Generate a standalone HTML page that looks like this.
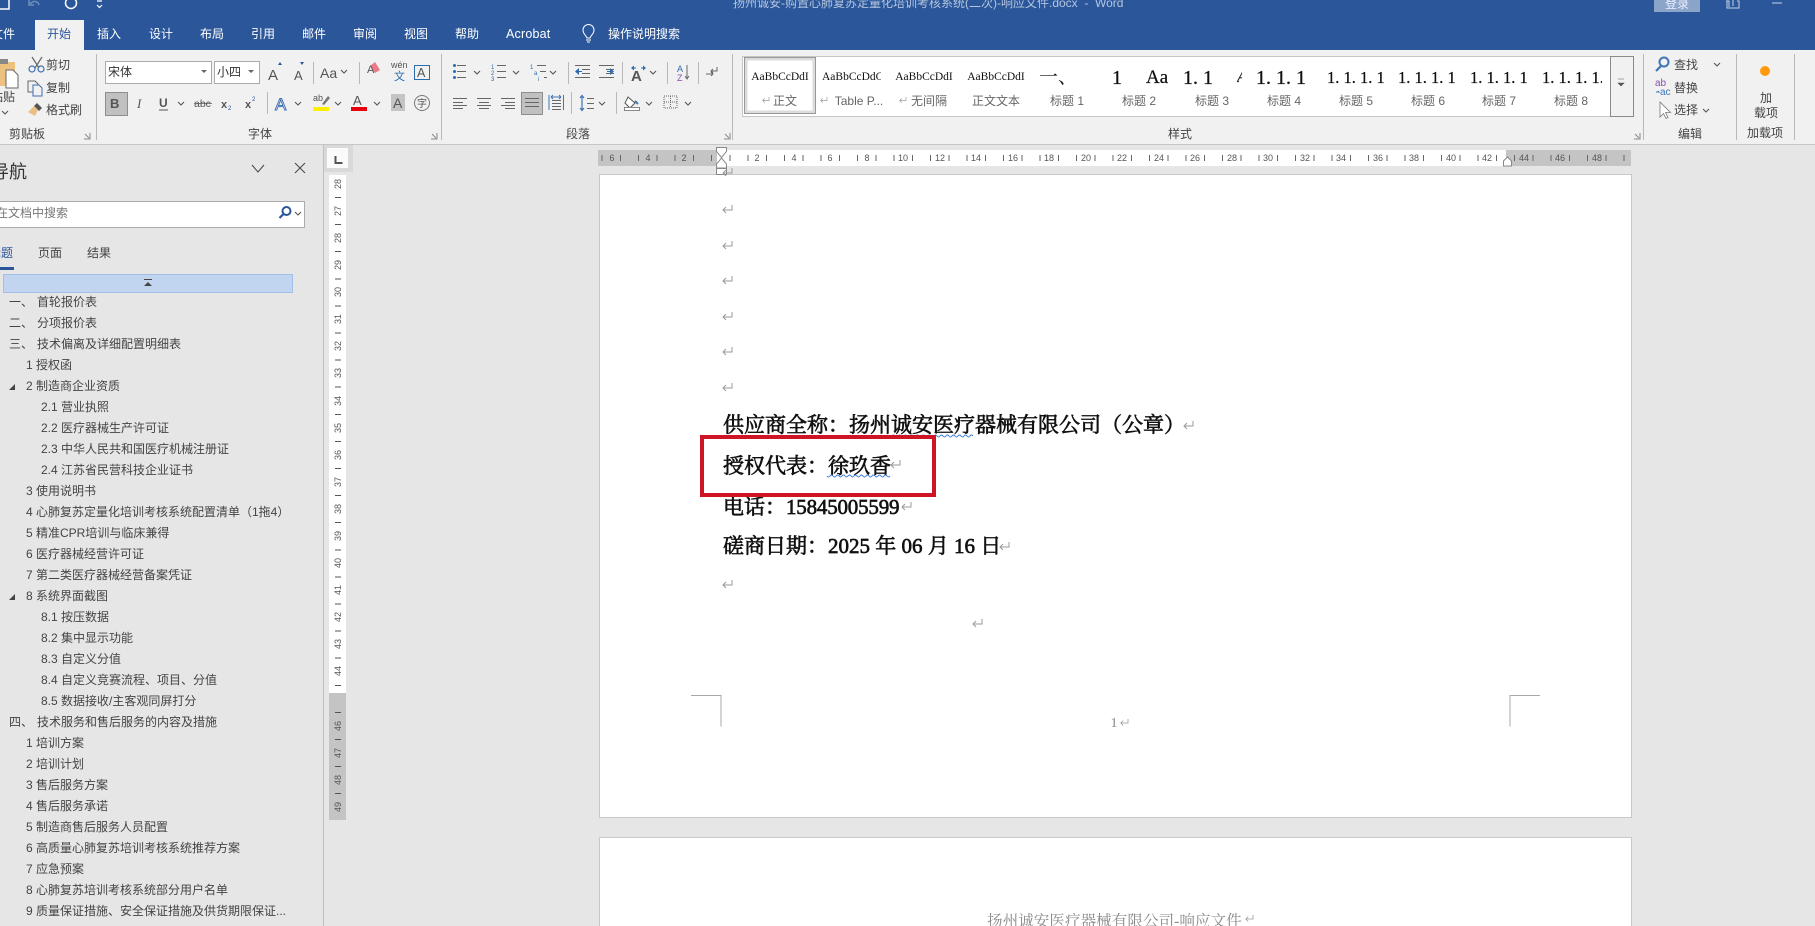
<!DOCTYPE html>
<html lang="zh"><head><meta charset="utf-8"><title>Word</title>
<style>
html,body{margin:0;padding:0;width:1815px;height:926px;overflow:hidden;background:#e6e6e6}
body{position:relative;font-family:"Liberation Sans","Noto Sans CJK SC",sans-serif;font-size:12px;color:#444}
.b{position:absolute}
.t{position:absolute;white-space:nowrap;line-height:16px;transform:translateY(-50%)}
.m{position:absolute;white-space:nowrap;line-height:16px;transform:translate(-50%,-50%)}
.r{position:absolute;font-size:9px;color:#555;line-height:10px;transform:translate(-50%,-50%)}
.v{position:absolute;left:338px;font-size:9px;color:#555;line-height:10px;transform:translate(-50%,-50%) rotate(-90deg)}
.tab{color:#fff}
.sm{font-family:"Liberation Serif","Noto Serif CJK SC",serif;color:#111;font-size:12px}
.h{position:absolute;white-space:nowrap;overflow:hidden;font-family:"Liberation Serif","Noto Serif CJK SC",serif;color:#111;line-height:22px;height:22px;top:67px;-webkit-text-stroke:.25px #111}
.lb{color:#666;font-size:12px}
.d{position:absolute;white-space:nowrap;font-family:"Liberation Serif","Noto Serif CJK SC",serif;font-size:21px;font-weight:400;-webkit-text-stroke:.65px #111;color:#111;line-height:28px;transform:translateY(-50%)}
svg{position:absolute;left:0;top:0;overflow:hidden}
</style></head><body>

<!-- title bar + ribbon backgrounds -->
<div class="b" style="left:0;top:0;width:1815px;height:50px;background:#2b579a"></div>
<div class="b" style="left:0;top:50px;width:1815px;height:94px;background:#f1f1f1"></div>
<div class="b" style="left:0;top:144px;width:1815px;height:1px;background:#c6c6c6"></div>
<div class="b" style="left:35px;top:20px;width:49px;height:30px;background:#f1f1f1"></div>

<div class="t" style="left:733px;top:3px;color:#b4c5de">扬州诚安-购置心肺复苏定量化培训考核系统(二次)-响应文件.docx&nbsp; -&nbsp; Word</div>
<div class="b" style="left:1654px;top:0;width:46px;height:12px;background:#8ba4c9"></div>
<div class="m" style="left:1677px;top:4px;color:#eef">登录</div>

<div class="t tab" style="left:-9px;top:34px">文件</div>
<div class="t" style="left:47px;top:34px;color:#2b579a">开始</div>
<div class="t tab" style="left:97px;top:34px">插入</div>
<div class="t tab" style="left:149px;top:34px">设计</div>
<div class="t tab" style="left:200px;top:34px">布局</div>
<div class="t tab" style="left:251px;top:34px">引用</div>
<div class="t tab" style="left:302px;top:34px">邮件</div>
<div class="t tab" style="left:353px;top:34px">审阅</div>
<div class="t tab" style="left:404px;top:34px">视图</div>
<div class="t tab" style="left:455px;top:34px">帮助</div>
<div class="t tab" style="left:506px;top:34px;font-size:12.5px;letter-spacing:.2px">Acrobat</div>
<div class="t tab" style="left:608px;top:34px">操作说明搜索</div>

<!-- clipboard text -->
<div class="t" style="left:-9px;top:97px">粘贴</div>
<div class="t" style="left:46px;top:65px">剪切</div>
<div class="t" style="left:46px;top:88px">复制</div>
<div class="t" style="left:46px;top:110px">格式刷</div>
<div class="m" style="left:27px;top:134px">剪贴板</div>
<div class="m" style="left:260px;top:134px">字体</div>
<div class="m" style="left:578px;top:134px">段落</div>
<div class="m" style="left:1180px;top:134px">样式</div>
<div class="m" style="left:1690px;top:134px">编辑</div>
<div class="m" style="left:1765px;top:133px">加载项</div>

<!-- font boxes -->
<div class="b" style="left:105px;top:61px;width:105px;height:21px;background:#fff;border:1px solid #ababab"></div>
<div class="t" style="left:108px;top:72px;color:#333">宋体</div>
<div class="b" style="left:214px;top:61px;width:44px;height:21px;background:#fff;border:1px solid #ababab"></div>
<div class="t" style="left:217px;top:72px;color:#333">小四</div>
<div class="b" style="left:105px;top:92px;width:21px;height:22px;background:#c0c0c0;border:1px solid #8e8e8e"></div>
<div class="b" style="left:521px;top:92px;width:20px;height:21px;background:#c0c0c0;border:1px solid #8e8e8e"></div>

<!-- style gallery -->
<div class="b" style="left:742px;top:56px;width:890px;height:59px;background:#fff;border:1px solid #c6c6c6"></div>
<div class="b" style="left:744px;top:57px;width:70px;height:55px;background:#fff;border:1px solid #999;box-shadow:inset 0 0 0 2.500px #dcdcdc"></div>
<div class="b" style="left:1610px;top:56px;width:22px;height:59px;background:#f1f1f1;border:1px solid #8a8a8a"></div>
<div class="m sm" style="left:780px;top:77px;font-size:11.5px">AaBbCcDdI</div>
<div class="t sm" style="left:822px;top:77px;font-size:11.5px;width:59px;overflow:hidden">AaBbCcDdC</div>
<div class="m sm" style="left:924px;top:77px;font-size:11.5px">AaBbCcDdI</div>
<div class="m sm" style="left:996px;top:77px;font-size:11.5px">AaBbCcDdI</div>
<div class="m sm" style="left:1058px;top:78px;font-size:19px">一、</div>
<div class="h" style="left:1112px;font-size:20px">1</div>
<div class="h" style="left:1146px;font-size:19px">Aa</div>
<div class="h" style="left:1183px;font-size:20px">1. 1</div>
<div class="h" style="left:1237px;font-size:16px;width:5px;font-style:italic">A</div>
<div class="h" style="left:1256px;font-size:20px">1. 1. 1</div>
<div class="h" style="left:1327px;font-size:16.5px;width:58px">1. 1. 1. 1</div>
<div class="h" style="left:1398px;font-size:16.5px;width:60px">1. 1. 1. 1</div>
<div class="h" style="left:1470px;font-size:16.5px;width:60px">1. 1. 1. 1</div>
<div class="h" style="left:1542px;font-size:16.5px;width:60px">1. 1. 1. 1.</div>
<div class="m lb" style="left:785px;top:101px">正文</div>
<div class="m lb" style="left:859px;top:101px">Table P...</div>
<div class="m lb" style="left:929px;top:101px">无间隔</div>
<div class="m lb" style="left:996px;top:101px">正文文本</div>
<div class="m lb" style="left:1067px;top:101px">标题 1</div>
<div class="m lb" style="left:1139px;top:101px">标题 2</div>
<div class="m lb" style="left:1212px;top:101px">标题 3</div>
<div class="m lb" style="left:1284px;top:101px">标题 4</div>
<div class="m lb" style="left:1356px;top:101px">标题 5</div>
<div class="m lb" style="left:1428px;top:101px">标题 6</div>
<div class="m lb" style="left:1499px;top:101px">标题 7</div>
<div class="m lb" style="left:1571px;top:101px">标题 8</div>

<!-- editing -->
<div class="t" style="left:1674px;top:65px">查找</div>
<div class="t" style="left:1674px;top:88px">替换</div>
<div class="t" style="left:1674px;top:110px">选择</div>
<div class="m" style="left:1766px;top:98px">加</div>
<div class="m" style="left:1766px;top:113px">载项</div>

<!-- navigation pane -->
<div class="b" style="left:323px;top:145px;width:1px;height:781px;background:#c0c0c0"></div>
<div class="t" style="left:-9px;top:172px;font-size:18px;line-height:24px;color:#333">导航</div>
<div class="b" style="left:-2px;top:201px;width:305px;height:25px;background:#fff;border:1px solid #ababab"></div>
<div class="t" style="left:-4px;top:213px;color:#777">在文档中搜索</div>
<div class="t" style="left:-11px;top:253px;color:#2b579a">标题</div>
<div class="t" style="left:38px;top:253px">页面</div>
<div class="t" style="left:87px;top:253px">结果</div>
<div class="b" style="left:0;top:267px;width:14px;height:3px;background:#2b579a"></div>
<div class="b" style="left:3px;top:274px;width:288px;height:17px;background:#c1d5f1;border:1px solid #a3bfe8"></div>

<div style="position:absolute;left:0;top:1px">
<div class="t" style="left:9px;top:301px">一、</div><div class="t" style="left:37px;top:301px">首轮报价表</div>
<div class="t" style="left:9px;top:322px">二、</div><div class="t" style="left:37px;top:322px">分项报价表</div>
<div class="t" style="left:9px;top:343px">三、</div><div class="t" style="left:37px;top:343px">技术偏离及详细配置明细表</div>
<div class="t" style="left:26px;top:364px">1 授权函</div>
<div class="t" style="left:26px;top:385px">2 制造商企业资质</div>
<div class="t" style="left:41px;top:406px">2.1 营业执照</div>
<div class="t" style="left:41px;top:427px">2.2 医疗器械生产许可证</div>
<div class="t" style="left:41px;top:448px">2.3 中华人民共和国医疗机械注册证</div>
<div class="t" style="left:41px;top:469px">2.4 江苏省民营科技企业证书</div>
<div class="t" style="left:26px;top:490px">3 使用说明书</div>
<div class="t" style="left:26px;top:511px">4 心肺复苏定量化培训考核系统配置清单（1拖4）</div>
<div class="t" style="left:26px;top:532px">5 精准CPR培训与临床兼得</div>
<div class="t" style="left:26px;top:553px">6 医疗器械经营许可证</div>
<div class="t" style="left:26px;top:574px">7 第二类医疗器械经营备案凭证</div>
<div class="t" style="left:26px;top:595px">8 系统界面截图</div>
<div class="t" style="left:41px;top:616px">8.1 按压数据</div>
<div class="t" style="left:41px;top:637px">8.2 集中显示功能</div>
<div class="t" style="left:41px;top:658px">8.3 自定义分值</div>
<div class="t" style="left:41px;top:679px">8.4 自定义竞赛流程、项目、分值</div>
<div class="t" style="left:41px;top:700px">8.5 数据接收/主客观同屏打分</div>
<div class="t" style="left:9px;top:721px">四、</div><div class="t" style="left:37px;top:721px">技术服务和售后服务的内容及措施</div>
<div class="t" style="left:26px;top:742px">1 培训方案</div>
<div class="t" style="left:26px;top:763px">2 培训计划</div>
<div class="t" style="left:26px;top:784px">3 售后服务方案</div>
<div class="t" style="left:26px;top:805px">4 售后服务承诺</div>
<div class="t" style="left:26px;top:826px">5 制造商售后服务人员配置</div>
<div class="t" style="left:26px;top:847px">6 高质量心肺复苏培训考核系统推荐方案</div>
<div class="t" style="left:26px;top:868px">7 应急预案</div>
<div class="t" style="left:26px;top:889px">8 心肺复苏培训考核系统部分用户名单</div>
<div class="t" style="left:26px;top:910px">9 质量保证措施、安全保证措施及供货期限保证...</div>
</div>

<!-- rulers -->
<div class="b" style="left:324px;top:145px;width:29px;height:27px;background:#d9d9d9"></div>
<div class="b" style="left:327px;top:148px;width:21px;height:20px;background:#fafafa"></div>
<div class="b" style="left:329px;top:175px;width:17px;height:518px;background:#fff"></div>
<div class="b" style="left:329px;top:693px;width:17px;height:127px;background:#c4c4c4"></div>
<div class="b" style="left:335px;top:175px;width:6px;height:645px;background:repeating-linear-gradient(180deg,transparent 0 22px,#555 22px 23px,transparent 23px 27.1px)"></div>
<span class="v" style="top:184px">28</span><span class="v" style="top:211px">27</span><span class="v" style="top:238px">28</span><span class="v" style="top:265px">29</span><span class="v" style="top:292px">30</span><span class="v" style="top:319px">31</span><span class="v" style="top:346px">32</span><span class="v" style="top:373px">33</span><span class="v" style="top:401px">34</span><span class="v" style="top:428px">35</span><span class="v" style="top:455px">36</span><span class="v" style="top:482px">37</span><span class="v" style="top:509px">38</span><span class="v" style="top:536px">39</span><span class="v" style="top:563px">40</span><span class="v" style="top:590px">41</span><span class="v" style="top:617px">42</span><span class="v" style="top:644px">43</span><span class="v" style="top:671px">44</span><span class="v" style="top:726px">46</span><span class="v" style="top:753px">47</span><span class="v" style="top:780px">48</span><span class="v" style="top:807px">49</span>

<div class="b" style="left:598px;top:150px;width:119px;height:16px;background:#c4c4c4"></div>
<div class="b" style="left:717px;top:150px;width:789px;height:16px;background:#fff"></div>
<div class="b" style="left:1506px;top:150px;width:125px;height:16px;background:#c4c4c4"></div>
<div class="b" style="left:593.25px;top:155px;width:1037px;height:6px;background:repeating-linear-gradient(90deg,transparent 0 8.6px,#666 8.6px 9.6px,transparent 9.6px 18.25px)"></div>
<span class="r" style="left:612px;top:158px">6</span><span class="r" style="left:648px;top:158px">4</span><span class="r" style="left:684px;top:158px">2</span><span class="r" style="left:757px;top:158px">2</span><span class="r" style="left:794px;top:158px">4</span><span class="r" style="left:830px;top:158px">6</span><span class="r" style="left:867px;top:158px">8</span><span class="r" style="left:903px;top:158px">10</span><span class="r" style="left:940px;top:158px">12</span><span class="r" style="left:976px;top:158px">14</span><span class="r" style="left:1013px;top:158px">16</span><span class="r" style="left:1049px;top:158px">18</span><span class="r" style="left:1086px;top:158px">20</span><span class="r" style="left:1122px;top:158px">22</span><span class="r" style="left:1159px;top:158px">24</span><span class="r" style="left:1195px;top:158px">26</span><span class="r" style="left:1232px;top:158px">28</span><span class="r" style="left:1268px;top:158px">30</span><span class="r" style="left:1305px;top:158px">32</span><span class="r" style="left:1341px;top:158px">34</span><span class="r" style="left:1378px;top:158px">36</span><span class="r" style="left:1414px;top:158px">38</span><span class="r" style="left:1451px;top:158px">40</span><span class="r" style="left:1487px;top:158px">42</span><span class="r" style="left:1524px;top:158px">44</span><span class="r" style="left:1560px;top:158px">46</span><span class="r" style="left:1597px;top:158px">48</span>

<!-- pages -->
<div class="b" style="left:600px;top:175px;width:1031px;height:642px;background:#fff;box-shadow:0 0 0 1px #c8c8c8"></div>
<div class="b" style="left:600px;top:838px;width:1031px;height:88px;background:#fff;box-shadow:0 0 0 1px #c8c8c8"></div>

<div class="d" style="left:723px;top:425px">供应商全称：扬州诚安医疗器械有限公司（公章）</div>
<div class="d" style="left:723px;top:466px">授权代表：徐玖香</div>
<div class="d" style="left:723px;top:507px"><span>电话：</span><span style="letter-spacing:-.2px">15845005599</span></div>
<div class="d" style="left:723px;top:545.5px">磋商日期：2025 年 06 月 16 日</div>
<div class="m" style="left:1114px;top:724px;font-family:'Liberation Serif',serif;font-size:14px;color:#888">1</div>
<div class="t" style="left:987px;top:922px;font-family:'Liberation Serif','Noto Serif CJK SC',serif;font-size:15.6px;color:#8a8a8a;line-height:20px">扬州诚安医疗器械有限公司-响应文件</div>

<!-- icons overlay -->
<svg width="1815" height="926" viewBox="0 0 1815 926" xmlns="http://www.w3.org/2000/svg">
<defs>
<path id="ret" d="M10 0v5H1M4 2L1 5l3 3" fill="none" stroke="#9a9a9a" stroke-width="1"/>
<path id="c" d="M0 0l3 3 3-3" fill="none" stroke="#555" stroke-width="1.1"/>
</defs>

<!-- quick access -->
<g fill="none" stroke="#fff" stroke-width="1.5">
<path d="M0 9h9V0" />
<path d="M30 4c3-4 8-3 9 1" stroke="#6f8fbd"/><path d="M29 0v5h5" stroke="#6f8fbd"/>
<circle cx="71" cy="3" r="5.5"/><path d="M97 1h5M97 5l2.5 2.5L102 5" stroke-width="1.2"/>
<path d="M587 38c-1-3-4-4-4-8a5.5 5.500 0 0 1 11 0c0 4-3 5-4 8zM586 40h5M587 42h3" stroke-width="1"/>
<path d="M1729 7v-6h-3M1737 1h2v7h-12V1M1733 6V0" stroke-width="1" stroke="#c5d2e6"/>
<path d="M1772 3h10" stroke-width="1" stroke="#c5d2e6"/>
</g>

<!-- clipboard icons -->
<rect x="-4" y="62" width="19" height="24" fill="#edc27e"/>
<rect x="0" y="59" width="8" height="5" fill="#888"/>
<path d="M6 70h7l5 5v13H6z" fill="#fff" stroke="#666"/>
<use href="#c" x="2" y="111"/>
<g fill="none" stroke="#666" stroke-width="1.2">
<path d="M32 57l7 11M42 57l-7 11"/><circle cx="32" cy="69" r="3" stroke="#3f6fb0"/><circle cx="41" cy="69" r="3" stroke="#3f6fb0"/>
<path d="M28 81h7l3 3v8H28z" stroke-width="1"/><path d="M33 85h6l3 3v8H33z" fill="#f1f1f1" stroke-width="1" stroke="#3f6fb0"/>
</g>
<path d="M37 103l5 5-3 3-5-5z" fill="#555"/><path d="M34 106l4 4-3 6-7-4z" fill="#e9bf85"/>
<g stroke="#888" fill="none"><path d="M90 133v6h-6" /><path d="M85 134l4 4"/><path d="M437 133v6h-6M432 134l4 4"/><path d="M730 133v6h-6M725 134l4 4"/><path d="M1640 133v6h-6M1635 134l4 4"/></g>

<!-- separators -->
<g stroke="#b8b8b8">
<path d="M96.500 54v86M441.500 54v86M732.500 54v86M1643.500 54v86M1736.500 54v86M1794.500 54v86"/>
<path d="M313.500 62v22M359.500 62v22M267.500 92v22M568.500 62v22M622.500 62v22M667.500 62v22M698.500 62v22M571.500 92v22M616.500 92v22"/>
</g>

<!-- chevrons -->
<g>
<path d="M201 70h6l-3 3z M248 70h6l-3 3z" fill="#666"/>
<use href="#c" x="341" y="70"/><use href="#c" x="178" y="102"/><use href="#c" x="295" y="102"/><use href="#c" x="335" y="102"/><use href="#c" x="374" y="102"/>
<use href="#c" x="474" y="71"/><use href="#c" x="513" y="71"/><use href="#c" x="550" y="71"/><use href="#c" x="650" y="71"/>
<use href="#c" x="599" y="102"/><use href="#c" x="646" y="102"/><use href="#c" x="685" y="102"/>
<use href="#c" x="1714" y="63"/><use href="#c" x="1703" y="109"/>
<path d="M1618 83h6l-3 3zM1618 79h6" fill="#555" stroke="#555" stroke-width=".6"/>
</g>

<!-- font letters -->
<g font-family="Liberation Sans, sans-serif" fill="#555">
<text x="268" y="80" font-size="15">A</text><path d="M278 65l2-3 2 3z" fill="#2b579a"/>
<text x="294" y="80" font-size="13">A</text><path d="M300 62l2 3 2-3z" fill="#2b579a"/>
<text x="320" y="78" font-size="14">Aa</text>
<text x="110" y="108" font-size="13" font-weight="700">B</text>
<text x="137" y="108" font-size="13" font-style="italic" font-family="Liberation Serif, serif">I</text>
<text x="159" y="107" font-size="12" font-weight="700">U</text><path d="M159 110h9" stroke="#555"/>
<text x="194" y="107" font-size="10.500">abc</text><path d="M194 103.500h18" stroke="#555" stroke-width=".8"/>
<text x="221" y="108" font-size="11" font-weight="700">x</text><text x="228" y="110" font-size="6" fill="#2b579a">2</text>
<text x="245" y="108" font-size="11" font-weight="700">x</text><text x="252" y="101" font-size="6" fill="#2b579a">2</text>
<text x="275" y="110" font-size="17" fill="#dfeaf8" stroke="#3f6fb0" stroke-width=".9">A</text>
<text x="313" y="101" font-size="9">ab</text><path d="M322 104l6-8 2 2-6 7z" fill="#777"/>
<rect x="313" y="107" width="16" height="4" fill="#ffef00"/>
<text x="353" y="105" font-size="13">A</text><rect x="351" y="107" width="16" height="4" fill="#e8000d"/>
<rect x="391" y="94" width="14" height="17" fill="#c4c4c4"/><text x="393" y="108" font-size="14">A</text>
<circle cx="422" cy="103" r="7.500" fill="none" stroke="#777"/><text x="422" y="107" font-size="10" text-anchor="middle" font-family="Noto Sans CJK SC, sans-serif">字</text>
<text x="391" y="68" font-size="9">wén</text><text x="394" y="80" font-size="11" fill="#2b6cb0" font-family="Noto Sans CJK SC, sans-serif">文</text>
<rect x="414.500" y="65.500" width="15" height="14" fill="none" stroke="#2b6cb0"/><text x="417" y="77" font-size="12.500">A</text>
<path d="M370 66l5-4 5 8-5 3z" fill="#e97b87"/><text x="367" y="73" font-size="11">A</text>
<text x="677" y="72" font-size="9" fill="#2b6cb0">A</text><text x="677" y="81" font-size="9" fill="#8a4fb5">Z</text><path d="M687 65v14M685 76l2 3 2-3" fill="none" stroke="#666"/>
<text x="631" y="81" font-size="15" font-weight="700">A</text>
<path d="M631 68l3-2.500v5zM646 68l-3-2.500v5z" fill="#2b6cb0"/><path d="M633 68h3M641 68h3" stroke="#2b6cb0"/>
</g>
<path d="M717 67v4h-6M713 69l-2 2 2 2M706 74h7M711 72l2 2-2 2" fill="none" stroke="#666"/>

<!-- paragraph icons -->
<g fill="none" stroke="#666">
<path d="M457 65.500h9M457 71.500h9M457 77.500h9"/><path d="M497 65.500h9M497 71.500h9M497 77.500h9"/><path d="M537 65.500h9M540 71.500h6M544 77.500h3"/>
<path d="M575 65.500h15M582 69.500h8M582 73.500h8M575 77.500h15M599 65.500h15M606 69.500h8M606 73.500h8M599 77.500h15"/>
<path d="M453 98.500h14M453 102.500h10M453 105.500h14M453 108.500h10"/>
<path d="M477 98.500h14M479 102.500h10M477 105.500h14M479 108.500h10"/>
<path d="M501 98.500h14M505 102.500h10M501 105.500h14M505 108.500h10"/>
<path d="M525 98.500h14M525 102.500h14M525 106.500h14"/>
<path d="M552 100.500h9M552 103.500h9M552 106.500h9M552 109.500h9"/>
<path d="M587 98.500h7M587 103.500h7M587 108.500h7"/>
<path d="M664 96h13v12h-13zM670.500 96v12M664 102h13" stroke-dasharray="1 1"/>
<path d="M628 97l7 6-5 5-5-5z" stroke="#555" fill="#fff"/><path d="M635 101l3 3" stroke="#3f76b8" stroke-width="2"/>
<rect x="624.500" y="107.500" width="15" height="3" fill="#fff" stroke="#888"/>
</g>
<g fill="#2b6cb0">
<circle cx="454.500" cy="65.500" r="1.500"/><circle cx="454.500" cy="71.500" r="1.500"/><circle cx="454.500" cy="77.500" r="1.500"/>
<path d="M575 71.500l4-3.500v7z M614 71.500l-4-3.500v7z"/><path d="M579 71.500h3M607 71.500h3" stroke="#2b6cb0"/>
<text x="491" y="69" font-size="6" font-family="Liberation Sans,sans-serif">1</text><text x="491" y="75" font-size="6" font-family="Liberation Sans,sans-serif">2</text><text x="491" y="81" font-size="6" font-family="Liberation Sans,sans-serif">3</text>
<text x="530" y="69" font-size="6" font-family="Liberation Sans,sans-serif">1</text><text x="534" y="75" font-size="6" font-family="Liberation Sans,sans-serif">a</text><text x="538" y="81" font-size="6" font-family="Liberation Sans,sans-serif">i</text>
</g>
<path d="M549 95v15M563.500 95v15M551 97h10M551 97l2-2M551 97l2 2M561 97l-2-2M561 97l-2 2" stroke="#3f76b8" fill="none"/>
<path d="M582 96v14M580 98l2-2.500 2 2.500M580 108l2 2.500 2-2.500" stroke="#3f76b8" fill="none" stroke-width="1.200"/>

<!-- gallery return marks -->
<use href="#ret" transform="translate(762 97) scale(.7)"/>
<use href="#ret" transform="translate(820 97) scale(.7)"/>
<use href="#ret" transform="translate(899 97) scale(.7)"/>

<!-- editing icons -->
<circle cx="1664" cy="62" r="4.500" fill="none" stroke="#3f76b8" stroke-width="2"/><path d="M1661 66l-5 5" stroke="#3f76b8" stroke-width="2.200"/>
<text x="1655" y="86" font-size="10" fill="#8a4fb5" font-family="Liberation Sans,sans-serif">ab</text>
<text x="1660" y="95" font-size="10" fill="#3f76b8" font-family="Liberation Sans,sans-serif">ac</text>
<path d="M1656 92h3l-1-1" stroke="#3f76b8" fill="none"/>
<path d="M1660 102v15l3.500-3.500 2.500 5 2-1-2.500-5h5z" fill="#fff" stroke="#777" stroke-width=".8"/>
<circle cx="1765" cy="71" r="5" fill="#ff9a10"/>

<!-- nav icons -->
<path d="M252 165l6 7 6-7M295 163l10 10M305 163l-10 10" fill="none" stroke="#444"/>
<circle cx="286.500" cy="211" r="4" fill="none" stroke="#2b579a" stroke-width="2"/><path d="M283.500 214l-4 4" stroke="#2b579a" stroke-width="2.200"/>
<use href="#c" x="295" y="212"/>
<path d="M144 279.500h8" stroke="#444"/><path d="M144 286l4-4 4 4z" fill="#444"/>
<path d="M9 390h6v-6z" fill="#444"/><path d="M9 600h6v-6z" fill="#444"/>

<!-- ruler markers -->
<path d="M335.500 156v7h7" fill="none" stroke="#555" stroke-width="2"/>
<path d="M716.500 147.500h10v4l-5 6-5-6z" fill="#fff" stroke="#888"/>
<path d="M716.500 168v-4l5-6 5 6v4z" fill="#fff" stroke="#888"/>
<rect x="716.500" y="168.500" width="10" height="6" fill="#fff" stroke="#888"/>
<path d="M1503.500 166v-5l4-4 4 4v5z" fill="#fff" stroke="#888"/>

<!-- document marks -->
<use href="#ret" x="722" y="168"/><use href="#ret" x="722" y="205"/><use href="#ret" x="722" y="241"/><use href="#ret" x="722" y="276"/><use href="#ret" x="722" y="312"/><use href="#ret" x="722" y="347"/><use href="#ret" x="722" y="383"/>
<use href="#ret" x="1183" y="421"/><use href="#ret" x="890" y="460"/><use href="#ret" x="901" y="502"/><use href="#ret" x="999" y="542"/><use href="#ret" x="722" y="580"/><use href="#ret" x="972" y="619"/>
<use href="#ret" transform="translate(1120 719) scale(.8)"/><use href="#ret" transform="translate(1245 915) scale(.8)"/>

<!-- squiggles -->
<path d="M889 436q1.500 2 3 0t3 0 3 0 3 0 3 0 3 0 3 0 3 0 3 0 3 0 3 0 3 0 3 0 3 0 3 0 3 0 3 0 3 0 3 0 3 0 3 0 3 0 3 0 3 0 3 0 3 0 3 0 3 0" fill="none" stroke="#3a7bd5" stroke-width="1"/>
<path d="M827 476q1.500 2 3 0t3 0 3 0 3 0 3 0 3 0 3 0 3 0 3 0 3 0 3 0 3 0 3 0 3 0 3 0 3 0 3 0 3 0 3 0 3 0 3 0" fill="none" stroke="#3a7bd5" stroke-width="1"/>

<!-- crop marks -->
<path d="M691 695.500h30v31M1540 695.500h-30v31" fill="none" stroke="#a8a8a8"/>

<!-- red annotation -->
<rect x="702" y="437" width="232" height="58" fill="none" stroke="#cf1426" stroke-width="4"/>
</svg>
</body></html>
